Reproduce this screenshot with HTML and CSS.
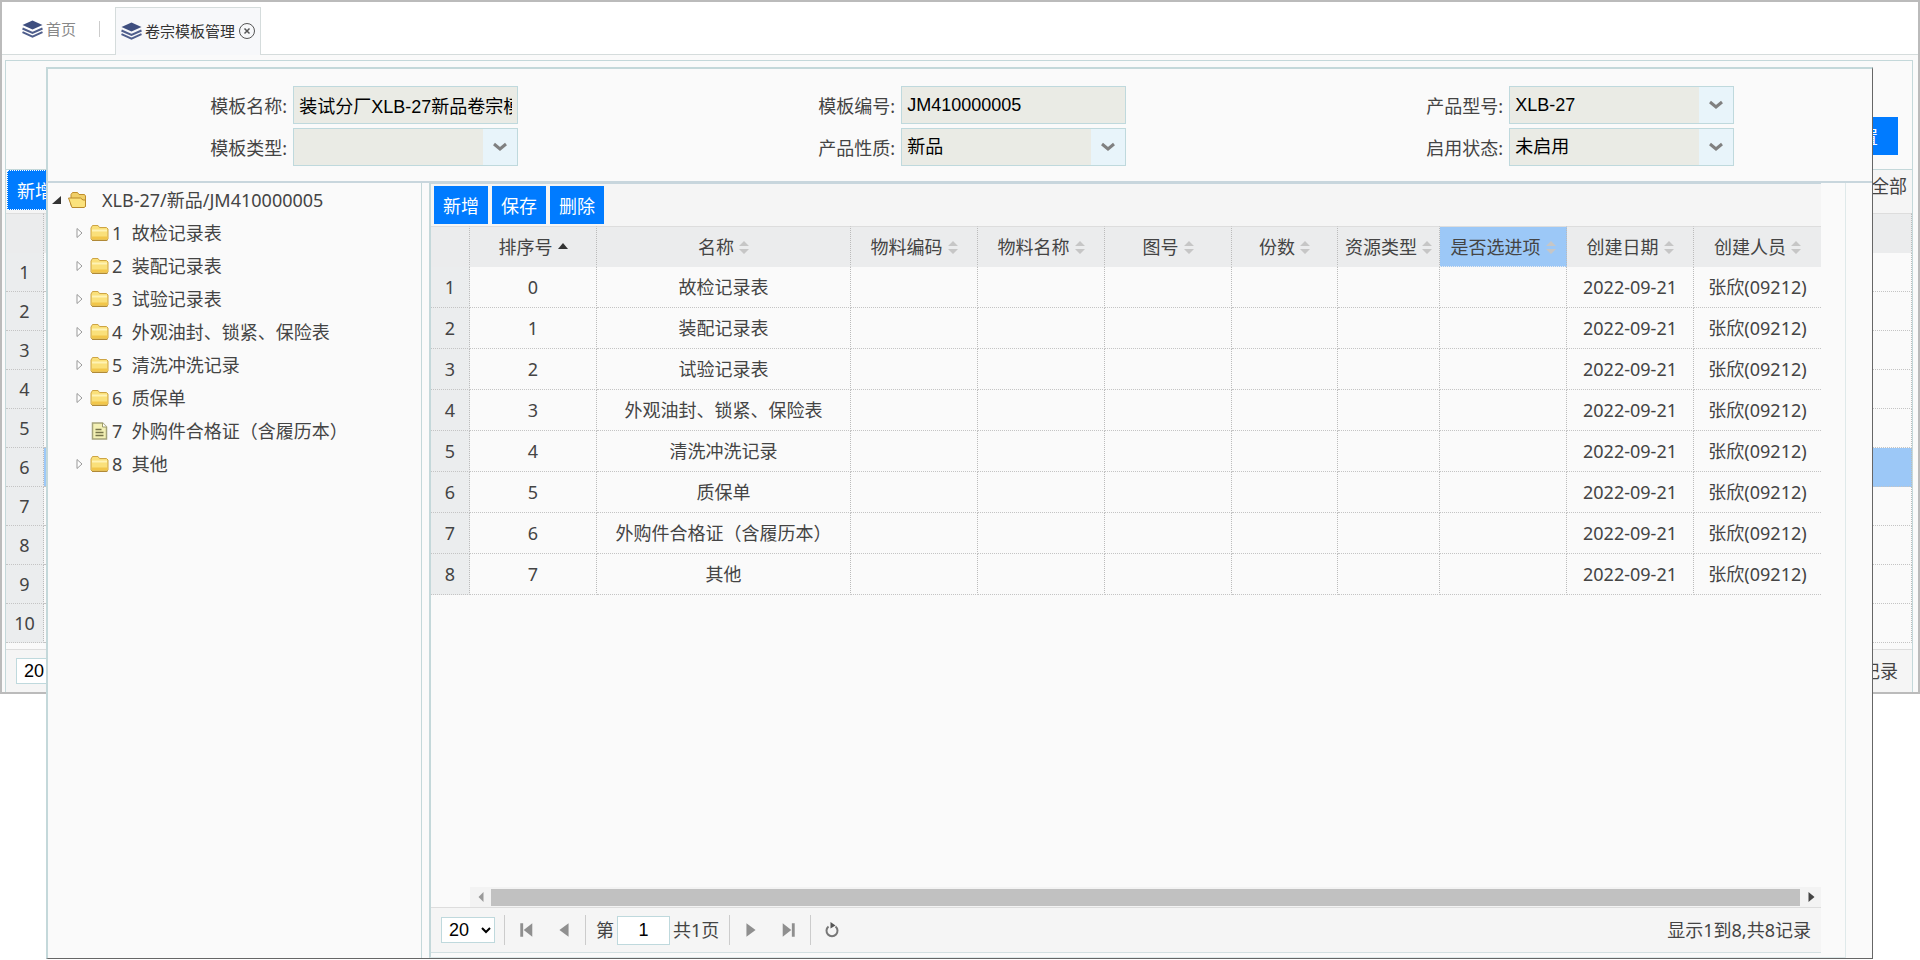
FILE: index.html
```html
<!DOCTYPE html>
<html lang="zh-CN">
<head>
  <meta charset="UTF-8">
  <meta name="viewport" content="width=device-width, initial-scale=1.0">
  <title>卷宗模板管理</title>
  <link rel="stylesheet" href="styles.css">
</head>
<body>
  <svg class="sprite" aria-hidden="true">
    <symbol id="i-layers" viewBox="0 0 21 18">
      <path d="M10.500 0.500 20.500 5 10.500 9.500 0.500 5Z" fill="#3f4f7f"/>
      <path d="M0.500 8.500 10.500 13 20.500 8.500" fill="none" stroke="#4f5e8c" stroke-width="2"/>
      <path d="M0.500 12.200 10.500 16.700 20.500 12.200" fill="none" stroke="#4f5e8c" stroke-width="2"/>
    </symbol>
    <symbol id="i-folder" viewBox="0 0 19 17">
      <path d="M1 14.500V3.500L2.500 1H8L9.500 3H16.500L18 4.500V14.500L16.500 16H2.500Z" fill="#fae07a" stroke="#cda444"/>
      <path d="M2 6H17" stroke="#fff3b4" stroke-width="2"/>
      <path d="M2 13.500H17.500" stroke="#f2c64a" stroke-width="3"/>
      <path d="M2 15.800H17.500" stroke="#a98235"/>
    </symbol>
    <symbol id="i-folder-open" viewBox="0 0 19 17">
      <path d="M3 14V3L4.500 1H9.500L11 3H16.500L17.500 4.500V15" fill="#f0cf68" stroke="#c08f2c"/>
      <path d="M0.500 6.500H12.500L15 8.500H17.500V15L16 16H4Z" fill="#fbe27c" stroke="#b9892c"/>
    </symbol>
    <symbol id="i-file" viewBox="0 0 16 18">
      <path d="M1 1H11L15 5V17H1Z" fill="#f3f0b4" stroke="#a5a37a" stroke-width="1.500"/>
      <path d="M11 1V5H15" fill="#fff" stroke="#9c9a68"/>
      <path d="M4 7.500H10M4 10.500H12M4 13.500H12" stroke="#77754a" stroke-width="1.500"/>
    </symbol>
    <symbol id="i-sort" viewBox="0 0 10 13">
      <path d="M5 0 10 5H0ZM0 8H10L5 13Z" fill="#c6c6c6"/>
    </symbol>
    <symbol id="i-asc" viewBox="0 0 10 13">
      <path d="M5 2 10 8H0Z" fill="#333"/>
    </symbol>
    <symbol id="i-prev" viewBox="0 0 12 14"><path d="M10 1V13L2 7Z" fill="#8f8f8f"/></symbol>
    <symbol id="i-next" viewBox="0 0 12 14"><path d="M2 1V13L10 7Z" fill="#8f8f8f"/></symbol>
    <symbol id="i-first" viewBox="0 0 12 14"><path d="M1 1H3.500V13H1ZM11.500 1V13L4 7Z" fill="#8f8f8f"/></symbol>
    <symbol id="i-last" viewBox="0 0 12 14"><path d="M8.500 1H11V13H8.500ZM0.500 1V13L8 7Z" fill="#8f8f8f"/></symbol>
    <symbol id="i-refresh" viewBox="0 0 14 16">
      <path d="M3.500 4.500A5.500 5.500 0 1 0 10.500 4.500" fill="none" stroke="#777" stroke-width="2"/>
      <path d="M5.500 0 10.500 3.500 5.500 6.500Z" fill="#555"/>
    </symbol>
  </svg>

  <div class="window">
    <nav class="tabs">
      <a class="tab" href="#"><svg class="layers"><use href="#i-layers"/></svg>首页</a>
      <span class="tab-split"></span>
      <div class="tab active">
        <svg class="layers"><use href="#i-layers"/></svg>卷宗模板管理
        <button class="tab-close" aria-label="关闭"><svg viewBox="0 0 16 16"><circle cx="8" cy="8" r="7.500" fill="none" stroke="#555"/><path d="M5.500 5.500 10.500 10.500M10.500 5.500 5.500 10.500" stroke="#555" stroke-width="1.500"/></svg></button>
      </div>
    </nav>
    <div class="page">
      <div class="search"><button class="btn">重置</button></div>
      <div class="toolbar page-toolbar">
        <button class="btn focused">新增</button>
        <span>全部</span>
      </div>
      <table class="grid page-grid">
        <thead><tr><th class="num"></th><th></th></tr></thead>
        <tbody>
          <tr><td class="num">1</td><td></td></tr>
          <tr><td class="num">2</td><td></td></tr>
          <tr><td class="num">3</td><td></td></tr>
          <tr><td class="num">4</td><td></td></tr>
          <tr><td class="num">5</td><td></td></tr>
          <tr class="selected"><td class="num">6</td><td></td></tr>
          <tr><td class="num">7</td><td></td></tr>
          <tr><td class="num">8</td><td></td></tr>
          <tr><td class="num">9</td><td></td></tr>
          <tr><td class="num">10</td><td></td></tr>
        </tbody>
      </table>
      <div class="pager page-pager">
        <select class="page-size" aria-label="每页条数"><option>20</option></select>
        <span class="info">记录</span>
      </div>
    </div>
  </div>

  <div class="dialog" role="dialog" aria-label="卷宗模板">
    <form class="form">
      <div class="field"><label for="name">模板名称:</label><input id="name" type="text" value="装试分厂XLB-27新品卷宗模板" readonly></div>
      <div class="field"><label for="code">模板编号:</label><input id="code" type="text" value="JM410000005" readonly></div>
      <div class="field"><label for="model">产品型号:</label><select id="model"><option>XLB-27</option></select></div>
      <div class="field"><label for="type">模板类型:</label><select id="type"><option></option></select></div>
      <div class="field"><label for="nature">产品性质:</label><select id="nature"><option>新品</option></select></div>
      <div class="field"><label for="state">启用状态:</label><select id="state"><option>未启用</option></select></div>
    </form>

    <div class="layout">
      <ul class="tree">
        <li class="root"><svg class="arrow" viewBox="0 0 10 10"><path d="M9 1V9H0Z" fill="#333"/></svg><svg class="icon"><use href="#i-folder-open"/></svg>XLB-27/新品/JM410000005</li>
        <li><svg class="arrow" viewBox="0 0 10 10"><path d="M3 0.500 8 5 3 9.500Z" fill="#fff" stroke="#999"/></svg><svg class="icon"><use href="#i-folder"/></svg>1&nbsp; 故检记录表</li>
        <li><svg class="arrow" viewBox="0 0 10 10"><path d="M3 0.500 8 5 3 9.500Z" fill="#fff" stroke="#999"/></svg><svg class="icon"><use href="#i-folder"/></svg>2&nbsp; 装配记录表</li>
        <li><svg class="arrow" viewBox="0 0 10 10"><path d="M3 0.500 8 5 3 9.500Z" fill="#fff" stroke="#999"/></svg><svg class="icon"><use href="#i-folder"/></svg>3&nbsp; 试验记录表</li>
        <li><svg class="arrow" viewBox="0 0 10 10"><path d="M3 0.500 8 5 3 9.500Z" fill="#fff" stroke="#999"/></svg><svg class="icon"><use href="#i-folder"/></svg>4&nbsp; 外观油封、锁紧、保险表</li>
        <li><svg class="arrow" viewBox="0 0 10 10"><path d="M3 0.500 8 5 3 9.500Z" fill="#fff" stroke="#999"/></svg><svg class="icon"><use href="#i-folder"/></svg>5&nbsp; 清洗冲洗记录</li>
        <li><svg class="arrow" viewBox="0 0 10 10"><path d="M3 0.500 8 5 3 9.500Z" fill="#fff" stroke="#999"/></svg><svg class="icon"><use href="#i-folder"/></svg>6&nbsp; 质保单</li>
        <li><span class="arrow"></span><svg class="icon"><use href="#i-file"/></svg>7&nbsp; 外购件合格证（含履历本）</li>
        <li><svg class="arrow" viewBox="0 0 10 10"><path d="M3 0.500 8 5 3 9.500Z" fill="#fff" stroke="#999"/></svg><svg class="icon"><use href="#i-folder"/></svg>8&nbsp; 其他</li>
      </ul>

      <div class="center">
        <div class="datagrid">
          <div class="toolbar">
            <button class="btn">新增</button>
            <button class="btn">保存</button>
            <button class="btn">删除</button>
          </div>
          <div class="grid-view">
            <table class="grid">
              <colgroup>
                <col class="c-num"><col class="c-mid"><col class="c-name"><col class="c-mid"><col class="c-mid"><col class="c-mid"><col class="c-count"><col class="c-kind"><col class="c-mid"><col class="c-mid"><col class="c-mid">
              </colgroup>
              <thead>
                <tr>
                  <th class="num"></th>
                  <th>排序号<svg class="sort"><use href="#i-asc"/></svg></th>
                  <th>名称<svg class="sort"><use href="#i-sort"/></svg></th>
                  <th>物料编码<svg class="sort"><use href="#i-sort"/></svg></th>
                  <th>物料名称<svg class="sort"><use href="#i-sort"/></svg></th>
                  <th>图号<svg class="sort"><use href="#i-sort"/></svg></th>
                  <th>份数<svg class="sort"><use href="#i-sort"/></svg></th>
                  <th>资源类型<svg class="sort"><use href="#i-sort"/></svg></th>
                  <th class="hover">是否选进项<svg class="sort"><use href="#i-sort"/></svg></th>
                  <th>创建日期<svg class="sort"><use href="#i-sort"/></svg></th>
                  <th>创建人员<svg class="sort"><use href="#i-sort"/></svg></th>
                </tr>
              </thead>
              <tbody>
                <tr><td class="num">1</td><td>0</td><td>故检记录表</td><td></td><td></td><td></td><td></td><td></td><td></td><td>2022-09-21</td><td>张欣(09212)</td></tr>
                <tr><td class="num">2</td><td>1</td><td>装配记录表</td><td></td><td></td><td></td><td></td><td></td><td></td><td>2022-09-21</td><td>张欣(09212)</td></tr>
                <tr><td class="num">3</td><td>2</td><td>试验记录表</td><td></td><td></td><td></td><td></td><td></td><td></td><td>2022-09-21</td><td>张欣(09212)</td></tr>
                <tr><td class="num">4</td><td>3</td><td>外观油封、锁紧、保险表</td><td></td><td></td><td></td><td></td><td></td><td></td><td>2022-09-21</td><td>张欣(09212)</td></tr>
                <tr><td class="num">5</td><td>4</td><td>清洗冲洗记录</td><td></td><td></td><td></td><td></td><td></td><td></td><td>2022-09-21</td><td>张欣(09212)</td></tr>
                <tr><td class="num">6</td><td>5</td><td>质保单</td><td></td><td></td><td></td><td></td><td></td><td></td><td>2022-09-21</td><td>张欣(09212)</td></tr>
                <tr><td class="num">7</td><td>6</td><td>外购件合格证（含履历本）</td><td></td><td></td><td></td><td></td><td></td><td></td><td>2022-09-21</td><td>张欣(09212)</td></tr>
                <tr><td class="num">8</td><td>7</td><td>其他</td><td></td><td></td><td></td><td></td><td></td><td></td><td>2022-09-21</td><td>张欣(09212)</td></tr>
              </tbody>
            </table>
          </div>
          <div class="hscroll">
            <svg viewBox="0 0 20 20"><path d="M13 5V15L8 10Z" fill="#999"/></svg>
            <div class="thumb"></div>
            <svg viewBox="0 0 20 20"><path d="M8 5V15L14 10Z" fill="#444"/></svg>
          </div>
          <div class="pager">
            <select class="page-size" aria-label="每页条数"><option>20</option></select>
            <span class="split"></span>
            <button class="page-btn" aria-label="首页"><svg><use href="#i-first"/></svg></button>
            <button class="page-btn" aria-label="上一页"><svg><use href="#i-prev"/></svg></button>
            <span class="split"></span>
            <label class="page-no" for="page">第</label>
            <input class="page-input" id="page" type="text" value="1">
            <span class="page-total">共1页</span>
            <span class="split"></span>
            <button class="page-btn" aria-label="下一页"><svg><use href="#i-next"/></svg></button>
            <button class="page-btn" aria-label="末页"><svg><use href="#i-last"/></svg></button>
            <span class="split"></span>
            <button class="page-btn" aria-label="刷新"><svg><use href="#i-refresh"/></svg></button>
            <span class="info">显示1到8,共8记录</span>
          </div>
        </div>
      </div>
    </div>
  </div>
</body>
</html>
```

FILE: styles.css
```css
* {
  box-sizing: border-box;
}
body {
  margin: 0;
  min-height: 100vh;
  position: relative;
  background-color: #fff;
  color: #444;
  font-family: "Noto Sans", "Noto Sans CJK SC", sans-serif;
  font-size: 18px;
  line-height: 24px;
}
button, input, select {
  font-family: "Liberation Sans", "Noto Sans CJK SC", sans-serif;
  font-size: 18px;
  margin: 0;
}
.sprite {
  position: absolute;
  width: 0;
  height: 0;
}

/* main window */
.window {
  border: 2px solid #bbb;
  background-color: #fafafa;
}
.tabs {
  display: flex;
  align-items: flex-end;
  height: 53px;
  padding-left: 20px;
  background-color: #fff;
  border-bottom: 1px solid #d5dcdc;
}
.tab {
  display: flex;
  align-items: center;
  height: 48px;
  padding-bottom: 2px;
  font-size: 15px;
  color: #888;
  text-decoration: none;
}
.tab.active {
  padding: 0 5px 2px;
  margin-bottom: -1px;
  color: #333;
  background-color: #f7f8fa;
  border: 1px solid #d5dcdc;
  border-bottom: none;
}
.layers {
  width: 21px;
  height: 18px;
  margin-right: 3px;
}
.tab-split {
  width: 1px;
  height: 16px;
  margin: 0 15px 17px 23px;
  background-color: #ccc;
}
.tab-close {
  width: 16px;
  height: 16px;
  margin-left: 4px;
  padding: 0;
  border: none;
  background: none;
}
.tab-close svg {
  display: block;
}
.page {
  margin: 5px 5px 0 3px;
  border: 1px solid #c4d8da;
  border-bottom: none;
}
.search {
  display: flex;
  justify-content: flex-end;
  align-items: flex-start;
  height: 109px;
  padding: 56px 14px 0 0;
  border-bottom: 1px solid #c4d8da;
}
.btn {
  height: 38px;
  padding: 0 9px;
  border: none;
  background-color: #007bff;
  color: #fff;
  white-space: nowrap;
}
.search .btn {
  padding: 0 20px;
}
.btn.focused {
  height: 40px;
  border: 1px dotted #fff;
}
.toolbar {
  display: flex;
  align-items: center;
  gap: 4px;
  height: 42px;
  padding: 0 3px;
  background-color: #f5f5f5;
}
.page-toolbar {
  justify-content: space-between;
  align-items: flex-start;
  height: 43px;
  padding: 0 5px 0 1px;
}
.page-toolbar span {
  padding-top: 4px;
}

/* tables */
.grid {
  width: 100%;
  table-layout: fixed;
  border-collapse: separate;
  border-spacing: 0;
}
.grid th, .grid td {
  height: 41px;
  padding: 0;
  border-right: 1px dotted #bbb;
  border-bottom: 1px dotted #c4c4c4;
  font-weight: normal;
  text-align: center;
  white-space: nowrap;
}
.grid th {
  background-color: #ebeced;
  border-top: 1px solid #ddd;
  border-bottom-color: #ebeced;
}
.grid td.num {
  background-color: #ebedee;
}
.grid th.hover {
  background-color: #9cc8f7;
}
.center .grid th:last-child, .center .grid td:last-child {
  border-right: none;
}
.page-grid .num {
  width: 38px;
}
.page-grid td {
  height: 39px;
}
.page-grid th {
  height: 40px;
}
.page-grid .selected td {
  background-color: #9cc8f7;
}
.page-grid .selected td.num {
  background-color: #ebedee;
}
.c-num {
  width: 39px;
}
.c-mid {
  width: 127px;
}
.c-name {
  width: 254px;
}
.c-count {
  width: 106px;
}
.c-kind {
  width: 102px;
}
.sort {
  width: 10px;
  height: 13px;
  margin-left: 5px;
}

/* dialog */
.dialog {
  position: absolute;
  top: 67px;
  right: 47px;
  bottom: 1px;
  left: 46px;
  display: flex;
  flex-direction: column;
  background-color: #fafafa;
  border: 2px solid #c4d8da;
  border-right: 1px solid #666;
  border-bottom: 1px solid #666;
}
.form {
  display: grid;
  grid-template-columns: repeat(3, 1fr);
  row-gap: 4px;
  padding: 17px 0 15px;
  border-bottom: 2px solid #c8d6dd;
}
.field {
  display: flex;
  align-items: center;
}
.field label {
  width: 40%;
  margin-right: 2px;
  padding: 2px 4px 0 0;
  text-align: right;
}
.field input, .field select {
  width: 37%;
  height: 38px;
  padding: 0 5px;
  border: 1px solid #bfd9dd;
  border-radius: 0;
  background-color: #eaebe5;
  color: #000;
}
.field select {
  appearance: none;
  background-image: url("data:image/svg+xml,%3Csvg xmlns='http://www.w3.org/2000/svg' width='34' height='38'%3E%3Crect width='34' height='38' fill='%23e8f4fa'/%3E%3Cpath d='M11 16 17 21 23 16' fill='none' stroke='%23808080' stroke-width='3'/%3E%3C/svg%3E");
  background-repeat: no-repeat;
  background-position: right center;
}
.layout {
  flex: 1;
  display: flex;
  gap: 7px;
  min-height: 0;
  padding-right: 26px;
}
.tree {
  width: 374px;
  margin: 0;
  padding: 0;
  list-style: none;
  border-right: 1px solid #c4d8da;
}
.tree li {
  display: flex;
  align-items: center;
  height: 33px;
  padding-left: 26px;
  white-space: nowrap;
}
.tree li.root {
  padding-left: 4px;
}
.tree .arrow {
  width: 10px;
  height: 10px;
  margin-right: 6px;
}
.tree .icon {
  width: 19px;
  height: 18px;
  margin-right: 3px;
}
.tree .root .icon {
  margin-right: 15px;
}
.center {
  flex: 1;
  min-width: 0;
  padding: 0 24px 4px 0;
  border: 1px solid #dfe9ea;
  border-top: none;
  border-left: 2px solid #c4d8da;
}
.datagrid {
  display: flex;
  flex-direction: column;
  height: 100%;
  border-top: 1px solid #c8d6dd;
}
.grid-view {
  flex: 1;
}
.hscroll {
  display: flex;
  align-items: center;
  height: 20px;
  margin-left: 39px;
  background-color: #f3f3f3;
}
.hscroll svg {
  width: 21px;
  height: 20px;
}
.thumb {
  flex: 1;
  height: 17px;
  background-color: #c1c1c1;
}
.pager {
  display: flex;
  align-items: center;
  height: 46px;
  padding: 0 10px;
  background-color: #f5f5f5;
  border-top: 1px solid #ddd;
  border-bottom: 1px solid #d3e0e2;
}
.page-pager {
  height: 43px;
  margin-top: 6px;
  padding: 0 14px 0 10px;
  border-bottom: none;
}
.page-size {
  width: 54px;
  height: 26px;
  margin-right: 7px;
  padding: 0 3px;
  border: 1px solid #bfd9dd;
  border-radius: 0;
  background-color: #fff;
  color: #000;
}
.split {
  width: 1px;
  height: 30px;
  margin: 0 2px;
  background-color: #ccc;
}
.page-btn {
  width: 26px;
  padding: 0;
  margin: 0 6px;
  border: none;
  background: none;
}
.page-btn svg {
  display: block;
  width: 14px;
  height: 16px;
  margin: 0 auto;
}
.page-no {
  margin-left: 8px;
}
.page-total {
  margin-right: 8px;
}
.page-input {
  width: 53px;
  height: 29px;
  margin: 0 3px;
  padding: 0;
  text-align: center;
  border: 1px solid #bfd9dd;
  background-color: #fff;
  color: #000;
}
.info {
  margin-left: auto;
}
```
